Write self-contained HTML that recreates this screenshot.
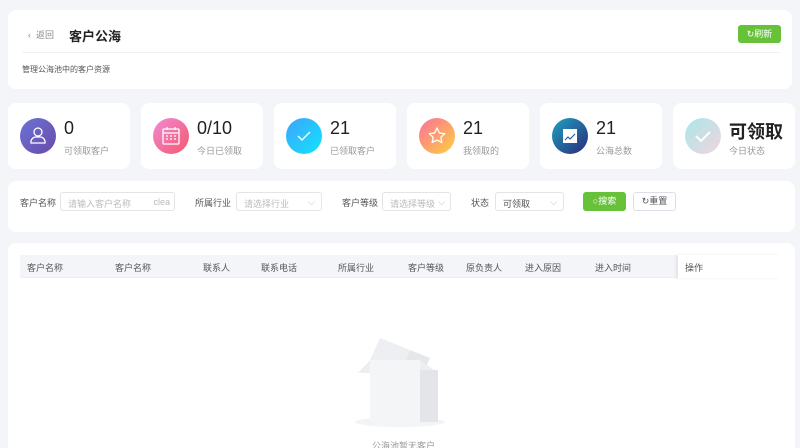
<!DOCTYPE html>
<html><head><meta charset="utf-8"><style>
*{box-sizing:border-box;margin:0;padding:0}
html,body{width:800px;height:448px;overflow:hidden}
body{background:#f4f5f8;font-family:"Liberation Sans","Noto Sans CJK SC",sans-serif;position:relative;color:#333}
.card{position:absolute;background:#fff;border-radius:8px}
.abs{position:absolute}
.stat{top:103px;width:122px;height:66px}
.ic{position:absolute;left:12px;top:15px;width:36px;height:36px;border-radius:50%}
.num{position:absolute;left:56px;top:15px;font-size:18px;color:#222}
.lab{position:absolute;left:56px;top:41px;font-size:9px;color:#999}
.lbl{position:absolute;top:196px;font-size:9px;color:#555}
.inp{position:absolute;top:192px;height:19px;border:1px solid #e2e4e8;border-radius:3px;font-size:9px;color:#bbb;padding:4px 7px}
.th{position:absolute;top:261px;font-size:9px;color:#555}
</style></head><body>
<div class="card" style="left:8px;top:10px;width:784px;height:79px">
 <div class="abs" style="left:20px;top:18px;font-size:9px;color:#888">‹&nbsp;&nbsp;返回</div>
 <div class="abs" style="left:61px;top:16px;font-size:13px;font-weight:bold;color:#222">客户公海</div>
 <div class="abs" style="left:730px;top:15px;width:43px;height:18px;background:#67c23a;border-radius:3px;color:#fff;font-size:9px;text-align:center;line-height:18px">↻刷新</div>
 <div class="abs" style="left:14px;top:42px;width:758px;height:1px;background:#eef0f3"></div>
 <div class="abs" style="left:14px;top:54px;font-size:8px;color:#555">管理公海池中的客户资源</div>
</div>

<div class="card stat" style="left:8px"><div class="ic" style="background:linear-gradient(135deg,#6a74d6,#6a4aa8)"><svg width="36" height="36"><circle cx="18" cy="14" r="4" fill="none" stroke="#fff" stroke-width="1.3"/><path d="M11 25v-2a5 5 0 0 1 5-4h4a5 5 0 0 1 5 4v2z" fill="none" stroke="#fff" stroke-width="1.3"/></svg></div><div class="num">0</div><div class="lab">可领取客户</div></div>
<div class="card stat" style="left:141px"><div class="ic" style="background:linear-gradient(135deg,#f08bd6,#f5576c)"><svg width="36" height="36"><rect x="10" y="11" width="16" height="15" rx="1" fill="none" stroke="#fff" stroke-width="1.3"/><path d="M10 15h16M14 9v3M22 9v3M13 18h2M17 18h2M21 18h2M13 21h2M17 21h2M21 21h2" stroke="#fff" stroke-width="1.2"/></svg></div><div class="num">0/10</div><div class="lab">今日已领取</div></div>
<div class="card stat" style="left:274px"><div class="ic" style="background:linear-gradient(135deg,#3fa3fb,#10e4fd)"><svg width="36" height="36"><path d="M12 18l4 4 8-8" fill="none" stroke="#fff" stroke-width="1.4"/></svg></div><div class="num">21</div><div class="lab">已领取客户</div></div>
<div class="card stat" style="left:407px"><div class="ic" style="background:linear-gradient(135deg,#fa709a,#fed040)"><svg width="36" height="36"><path d="M18 10l2.4 5 5.4.6-4 3.7 1.1 5.3L18 22l-4.9 2.6 1.1-5.3-4-3.7 5.4-.6z" fill="none" stroke="#fff" stroke-width="1.3" stroke-linejoin="round"/></svg></div><div class="num">21</div><div class="lab">我领取的</div></div>
<div class="card stat" style="left:540px"><div class="ic" style="background:linear-gradient(135deg,#1fa2c0,#2b2a7a)"><svg width="36" height="36"><rect x="11" y="11" width="14" height="14" fill="#fff"/><path d="M13 22l3-3 2 2 5-5" fill="none" stroke="#2f5ea8" stroke-width="1.2"/></svg></div><div class="num">21</div><div class="lab">公海总数</div></div>
<div class="card stat" style="left:673px"><div class="ic" style="background:linear-gradient(135deg,#a8e8e8,#f1d4e0)"><svg width="36" height="36"><path d="M11 18l5 5 9-9" fill="none" stroke="#fff" stroke-width="2"/></svg></div><div class="num" style="left:56px;font-weight:bold">可领取</div><div class="lab">今日状态</div></div>

<div class="card" style="left:8px;top:181px;width:787px;height:51px"></div>
<div class="lbl" style="left:20px">客户名称</div>
<div class="inp" style="left:60px;width:115px">请输入客户名称<span style="position:absolute;right:4px">clea</span></div>
<div class="lbl" style="left:195px">所属行业</div>
<div class="inp" style="left:236px;width:86px">请选择行业<span style="position:absolute;right:6px">⌵</span></div>
<div class="lbl" style="left:342px">客户等级</div>
<div class="inp" style="left:382px;width:69px">请选择等级<span style="position:absolute;right:5px">⌵</span></div>
<div class="lbl" style="left:471px">状态</div>
<div class="inp" style="left:495px;width:69px;color:#555">可领取<span style="position:absolute;right:6px;color:#bbb">⌵</span></div>
<div class="abs" style="left:583px;top:192px;width:43px;height:19px;background:#67c23a;border-radius:3px;color:#fff;font-size:9px;text-align:center;line-height:19px">○搜索</div>
<div class="abs" style="left:633px;top:192px;width:43px;height:19px;border:1px solid #dcdfe6;border-radius:3px;color:#555;font-size:9px;text-align:center;line-height:17px">↻重置</div>

<div class="card" style="left:8px;top:243px;width:787px;height:220px"></div>
<div class="abs" style="left:20px;top:255px;width:760px;height:23px;background:#f4f5f9;border-bottom:1px solid #ebeef5"></div>
<div class="abs" style="left:678px;top:255px;width:102px;height:23px;background:#fff;box-shadow:-2px 0 3px rgba(0,0,0,.08)"></div>
<div class="th" style="left:27px">客户名称</div><div class="th" style="left:115px">客户名称</div><div class="th" style="left:203px">联系人</div><div class="th" style="left:261px">联系电话</div><div class="th" style="left:338px">所属行业</div><div class="th" style="left:408px">客户等级</div><div class="th" style="left:466px">原负责人</div><div class="th" style="left:525px">进入原因</div><div class="th" style="left:595px">进入时间</div><div class="th" style="left:685px">操作</div>

<svg class="abs" style="left:350px;top:330px" width="100" height="100">
<ellipse cx="50" cy="92" rx="45" ry="5" fill="#f3f4f7"/>
<path d="M20 30 L30 8 L60 20 L50 45z" fill="#eeeff2"/>
<path d="M50 45 L60 20 L80 28 L70 50z" fill="#e6e7ea"/>
<path d="M20 30 L8 43 L22 43z" fill="#eceef1"/>
<rect x="20" y="30" width="50" height="62" fill="#f4f5f7"/>
<path d="M70 30 L88 43 L85 43 L70 40z" fill="#eceef1"/>
<rect x="70" y="40" width="18" height="52" fill="#e4e5e9"/>
</svg>
<div class="abs" style="left:372px;top:439px;font-size:9px;color:#999">公海池暂无客户</div>
</body></html>
